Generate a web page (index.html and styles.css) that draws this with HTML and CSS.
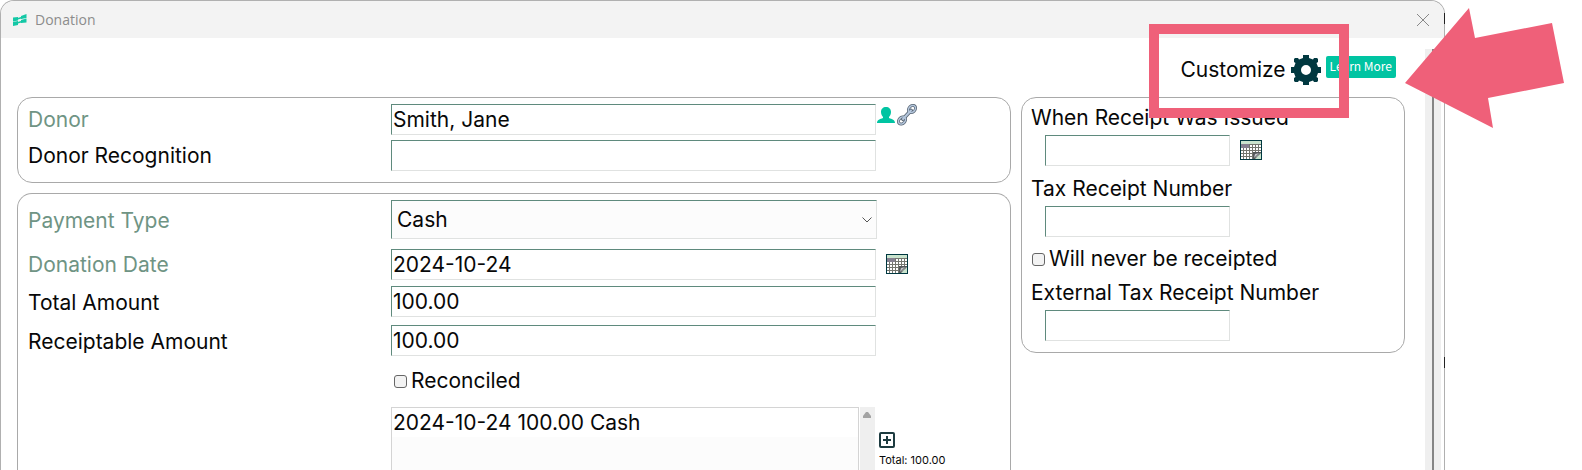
FILE: index.html
```
<!DOCTYPE html>
<html lang="en">
<head>
    <meta charset="UTF-8">
    <meta name="viewport" content="width=device-width, initial-scale=1.0">
    <title>Donation</title>
    <link rel="stylesheet" href="styles.css">
</head>
<body>
    <!-- Shared calendar icon -->
    <svg class="sprite" aria-hidden="true">
        <symbol id="calendar" viewBox="0 0 22 20">
            <rect width="22" height="20" fill="#003840"/>
            <rect x="1" y="1" width="20" height="18" fill="#c9e3cd"/>
            <rect x="1" y="4" width="20" height="15" fill="#74766f"/>
            <path d="M1 6h20M1 9h20M1 12h20M1 15h20M1 18h20" stroke="#fff" stroke-width="2" stroke-dasharray="2 1"/>
            <rect x="1" y="4" width="8" height="4" fill="#858090"/>
            <path d="M13 19v-7h8v7z" fill="#55585a"/>
            <path d="M14 18l1-4 5-1-3 4z" fill="#c4c6ca"/>
            <path d="M15 19l6-6v6z" fill="#c9e3cd"/>
            <path d="M14 18.500L20.500 12" stroke="#55585a" fill="none"/>
        </symbol>
    </svg>

    <div class="window">
        <div class="title-bar">
            <svg class="app-icon" viewBox="0 0 14 12">
                <path d="M0 3.500L5 3v3.500L0 7.500zM8 2l5.500-2v4L8 5zM0 8l5-1v4l-5 1zM8 6l5.500-1.500v4L8 9z" fill="#14c8a6"/>
                <path d="M4 5l5-1.500M4 9l5-1.500" stroke="#14c8a6" stroke-width="1.500"/>
            </svg>
            <span class="title">Donation</span>
            <button class="close" aria-label="Close">
                <svg viewBox="0 0 12 12"><path d="M0 0l12 12M12 0L0 12" stroke="#888" fill="none"/></svg>
            </button>
        </div>

        <div class="window-body">
            <form class="content">
                <div class="toolbar">
                    <span class="customize">Customize</span>
                    <button type="button" class="gear" aria-label="Customize">
                        <svg viewBox="0 0 30 30">
                            <path fill="#003840" fill-rule="evenodd" d="M12 0h6v3l4 1.500L23 3h3l1 1v3l-1.500 1L27 12h3v6h-3l-1.500 4 1.500 1v3l-1 1h-3l-1-1.500L18 27v3h-6v-3l-4-1.500L7 27H4l-1-1v-3l1.500-1L3 18H0v-6h3l1.500-4L3 7V4l1-1h3l1 1.500L12 3zM15 10a5 5 0 1 0 0 10a5 5 0 1 0 0-10z"/>
                        </svg>
                    </button>
                    <a class="learn-more" href="#">Learn More</a>
                </div>

                <div class="columns">
                    <div class="main-column">
                        <div class="panel donor-panel">
                            <div class="row">
                                <label class="required" for="donor">Donor</label>
                                <input type="text" id="donor" value="Smith, Jane">
                                <span class="row-icons">
                                    <svg class="person" viewBox="0 0 18 16"><path fill="#00c4a2" d="M9 0c3 0 5 2 5 5 0 2-1 4-2 5v1c3 1 6 2 6 5H0c0-3 3-4 6-5v-1C5 9 4 7 4 5c0-3 2-5 5-5z"/></svg>
                                    <svg class="link" viewBox="0 0 20 22">
                                        <g fill="none" stroke-linecap="round">
                                            <ellipse cx="5" cy="16.500" rx="4" ry="3" transform="rotate(-45 5 16.500)" stroke="#5b6876" stroke-width="3"/>
                                            <ellipse cx="15" cy="5" rx="4" ry="3" transform="rotate(-45 15 5)" stroke="#5b6876" stroke-width="3"/>
                                            <path d="M6 15l8-8.500" stroke="#5b6876" stroke-width="4"/>
                                            <path d="M6 15l8-8.500" stroke="#b4c6dc" stroke-width="2"/>
                                            <ellipse cx="5" cy="16.500" rx="4" ry="3" transform="rotate(-45 5 16.500)" stroke="#b4c6dc" stroke-width="1.500"/>
                                            <ellipse cx="15" cy="5" rx="4" ry="3" transform="rotate(-45 15 5)" stroke="#b4c6dc" stroke-width="1.500"/>
                                        </g>
                                    </svg>
                                </span>
                            </div>
                            <div class="row">
                                <label for="recognition">Donor Recognition</label>
                                <input type="text" id="recognition">
                            </div>
                        </div>

                        <div class="panel payment-panel">
                            <div class="row select-row">
                                <label class="required" for="payment-type">Payment Type</label>
                                <div class="select-wrap">
                                    <select id="payment-type">
                                        <option>Cash</option>
                                    </select>
                                    <svg class="chevron" viewBox="0 0 10 6"><path d="M.5.5L5 5 9.500.5" fill="none" stroke="#555"/></svg>
                                </div>
                            </div>
                            <div class="row">
                                <label class="required" for="donation-date">Donation Date</label>
                                <input type="text" id="donation-date" value="2024-10-24">
                                <svg class="calendar"><use href="#calendar"/></svg>
                            </div>
                            <div class="row amount-row">
                                <label for="total">Total Amount</label>
                                <input type="text" id="total" value="100.00">
                            </div>
                            <div class="row amount-row">
                                <label for="receiptable">Receiptable Amount</label>
                                <input type="text" id="receiptable" value="100.00">
                            </div>
                            <div class="row check-row">
                                <input type="checkbox" id="reconciled">
                                <label for="reconciled">Reconciled</label>
                            </div>
                            <div class="list-row">
                                <div class="list">
                                    <div class="list-items">
                                        <div class="list-item">2024-10-24 100.00 Cash</div>
                                    </div>
                                    <div class="list-scroll"><svg viewBox="0 0 8 6"><path d="M3 0h2l3 4v2H0V4z" fill="#a3a3a3"/></svg></div>
                                </div>
                                <div class="list-side">
                                    <button type="button" class="add" aria-label="Add">
                                        <svg viewBox="0 0 16 16"><rect x="1" y="1" width="14" height="14" rx="1" fill="none" stroke="#1d3b40" stroke-width="2"/><path d="M4 8h8M8 4v8" stroke="#1d3b40" stroke-width="2"/></svg>
                                    </button>
                                    <span class="total">Total: 100.00</span>
                                </div>
                            </div>
                        </div>
                    </div>

                    <div class="panel receipt-panel">
                        <label for="issued">When Receipt Was Issued</label>
                        <div class="field">
                            <input type="text" id="issued">
                            <svg class="calendar"><use href="#calendar"/></svg>
                        </div>
                        <label for="receipt-number">Tax Receipt Number</label>
                        <div class="field">
                            <input type="text" id="receipt-number">
                        </div>
                        <div class="never">
                            <input type="checkbox" id="never">
                            <label for="never">Will never be receipted</label>
                        </div>
                        <label for="external-number">External Tax Receipt Number</label>
                        <div class="field">
                            <input type="text" id="external-number">
                        </div>
                    </div>
                </div>
            </form>
            <div class="scrollbar"><div class="thumb"></div></div>
        </div>

        <!-- Slivers of the page behind the window edge -->
        <div class="edge-mark edge-top"></div>
        <div class="edge-mark edge-middle"></div>

        <!-- Callout over the Customize button -->
        <div class="highlight"></div>
        <svg class="arrow" viewBox="0 0 159 120"><path d="M0 75L64 0l6 30 77-15 12 60-76 15 5 30z" fill="#ef6079"/></svg>
    </div>
</body>
</html>
```
FILE: styles.css
```
* {
    box-sizing: border-box;
}

body {
    margin: 0;
    height: 100vh;
    padding-right: 137px;
    background: white;
    color: #080808;
    font-family: Inter, sans-serif;
    font-size: 21px;
    line-height: 28px;
}

button {
    padding: 0;
    border: 0;
    background: none;
}

svg {
    display: block;
    flex: none;
}

.sprite {
    position: absolute;
    width: 0;
    height: 0;
}

.window {
    position: relative;
    display: flex;
    flex-direction: column;
    height: 100%;
    border: 1px solid #b0b0b0;
    border-bottom: 0;
    border-radius: 14px 14px 0 0;
}

.title-bar {
    display: flex;
    align-items: center;
    height: 37px;
    padding: 0 15px 0 12px;
    border-radius: 13px 13px 0 0;
    background: #f3f3f3;
    color: #8c8c8c;
    font-family: "Open Sans", sans-serif;
    font-size: 14px;
}

.app-icon {
    width: 14px;
    height: 12px;
    margin-right: 8px;
}

.title {
    flex: 1;
    line-height: 20px;
}

.close svg {
    width: 12px;
    height: 12px;
}

.window-body {
    display: flex;
    flex: 1;
    min-height: 0;
    padding: 11px 3px 0 16px;
}

.content {
    display: flex;
    flex: 1;
    flex-direction: column;
    min-width: 0;
    margin-right: 20px;
}

.toolbar {
    display: flex;
    justify-content: flex-end;
    align-items: flex-start;
    gap: 5px;
    height: 48px;
    padding: 6px 9px 0 0;
}

.customize {
    line-height: 30px;
}

.gear svg {
    width: 30px;
    height: 30px;
}

.learn-more {
    height: 22px;
    margin-top: 1px;
    padding: 0 4px;
    border-radius: 2px;
    background: #00c4a2;
    color: white;
    font-family: "Noto Sans CJK JP", sans-serif;
    font-size: 12px;
    line-height: 20px;
    text-decoration: none;
}

.columns {
    display: flex;
    flex: 1;
    gap: 10px;
    min-height: 0;
}

.main-column {
    display: flex;
    flex: 1;
    flex-direction: column;
    min-width: 0;
}

.panel {
    border: 1px solid #a9a9a9;
    border-radius: 15px;
}

.donor-panel {
    height: 86px;
    margin-bottom: 10px;
    padding: 6px 10px 0;
}

.payment-panel {
    display: flex;
    flex: 1;
    flex-direction: column;
    padding: 6px 10px 0;
    border-bottom: 0;
    border-radius: 15px 15px 0 0;
}

.row {
    display: flex;
    align-items: center;
    height: 31px;
    margin-bottom: 5px;
}

.row > label:first-child {
    width: 363px;
}

.select-row > label,
.amount-row > label {
    padding-top: 3px;
}

.required {
    color: #6f9484;
}

input[type="text"],
select {
    width: 485px;
    height: 31px;
    margin: 0;
    padding: 0 1px;
    border: 1px solid #e0e2e1;
    border-top-color: #5f8a7d;
    border-left-color: #5f8a7d;
    border-radius: 0;
    background: white;
    color: #080808;
    font: inherit;
}

input[type="checkbox"] {
    width: 13px;
    height: 13px;
    margin: 0;
    border: 1px solid #666;
    border-radius: 3px;
    background: #f3f3f3;
    appearance: none;
}

.row-icons {
    display: flex;
    align-self: flex-start;
    gap: 2px;
    margin-left: 1px;
}

.person {
    width: 18px;
    height: 16px;
    margin-top: 3px;
}

.link {
    width: 20px;
    height: 22px;
}

.select-row {
    height: 39px;
    margin-bottom: 10px;
}

.select-wrap {
    position: relative;
}

select {
    display: block;
    width: 486px;
    height: 39px;
    padding: 0 5px;
    background: #fcfcfc;
    appearance: none;
}

.chevron {
    position: absolute;
    top: 17px;
    right: 5px;
    width: 10px;
    height: 6px;
    pointer-events: none;
}

.calendar {
    width: 22px;
    height: 20px;
    margin: 0 0 2px 10px;
}

.row.amount-row {
    margin: 1px 0 7px;
}

.row.check-row {
    height: 28px;
    margin: 4px 0 12px;
    padding-left: 366px;
    gap: 4px;
}

.list-row {
    display: flex;
    flex: 1;
    padding-left: 363px;
}

.list {
    display: flex;
    width: 484px;
}

.list-items {
    flex: 1;
    border: 1px solid #d4d4d4;
    border-bottom: 0;
    background: #fcfcfc;
}

.list-item {
    padding: 1px 1px 0;
    background: white;
}

.list-scroll {
    width: 15px;
    margin-left: 1px;
    padding: 5px 3px;
    background: #efefef;
}

.list-scroll svg {
    width: 8px;
    height: 6px;
}

.list-side {
    padding: 25px 0 0 4px;
}

.add svg {
    width: 16px;
    height: 16px;
}

.add {
    display: block;
}

.total {
    display: block;
    margin-top: 4px;
    font-size: 11px;
    line-height: 16px;
}

.receipt-panel {
    align-self: flex-start;
    width: 384px;
    padding: 6px 9px 11px;
}

.receipt-panel label {
    display: block;
}

.receipt-panel .field {
    display: flex;
    align-items: center;
    margin: 3px 0 9px;
    padding-left: 14px;
}

.receipt-panel .field:last-child {
    margin-bottom: 0;
}

.receipt-panel .field input {
    width: 185px;
}

.never {
    display: flex;
    align-items: center;
    gap: 4px;
    height: 26px;
    margin-bottom: 7px;
    padding-left: 1px;
}

.scrollbar {
    display: flex;
    justify-content: center;
    width: 16px;
    background: #efefef;
}

.thumb {
    width: 2px;
    background: #858585;
}

.edge-mark {
    position: absolute;
    right: -1px;
    width: 1px;
    height: 11px;
    background: #222;
}

.edge-top {
    top: 12px;
}

.edge-middle {
    top: 356px;
}

.highlight {
    position: absolute;
    top: 23px;
    right: 95px;
    width: 200px;
    height: 94px;
    border: 10px solid #ef6079;
}

.arrow {
    position: absolute;
    top: 7px;
    right: -120px;
    width: 159px;
    height: 120px;
}
```
